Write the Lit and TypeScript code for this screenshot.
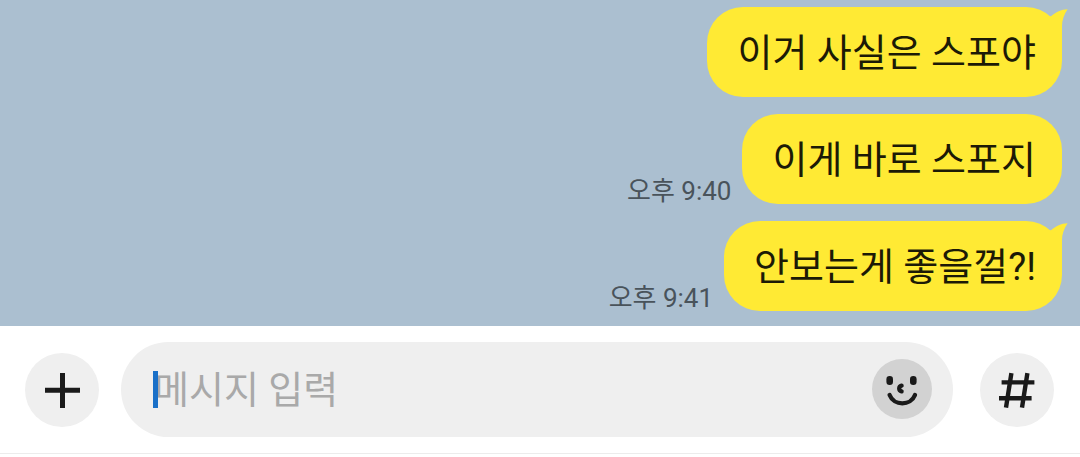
import { LitElement, html, css, nothing } from "lit";
import { customElement, property } from "lit/decorators.js";

interface Message {
  text: string;
  time?: string;
  tail?: boolean;
}

const messages: Message[] = [
  { text: "이거 사실은 스포야", tail: true },
  { text: "이게 바로 스포지", time: "오후 9:40" },
  { text: "안보는게 좋을껄?!", time: "오후 9:41", tail: true },
];

@customElement("chat-message")
export class ChatMessage extends LitElement {
  @property() text = "";
  @property() time = "";
  @property({ type: Boolean }) tail = false;

  static styles = css`
    :host {
      display: flex;
      justify-content: flex-end;
      align-items: flex-end;
      gap: 11px;
    }
    .time {
      font-size: 26px;
      line-height: 26px;
      color: #49535b;
    }
    .bubble {
      position: relative;
      margin: 0;
      padding: 20px 26px 18px 30px;
      border-radius: 36px;
      background: #ffea34;
      color: #1c1a06;
      font-size: 38px;
      line-height: 52px;
    }
    .tail {
      position: absolute;
      top: 0;
      right: -6px;
      width: 24px;
      height: 36px;
      fill: #ffea34;
    }
  `;

  render() {
    return html`
      ${this.time ? html`<time class="time">${this.time}</time>` : nothing}
      <p class="bubble">
        ${this.tail
          ? html`<svg class="tail" viewBox="0 0 24 36" aria-hidden="true">
              <path d="M7 9.3C12 5 17 2.4 23.6 2.2C20 7.5 18 13 18 19V36H0V9.3Z" />
            </svg>`
          : nothing}${this.text}
      </p>
    `;
  }
}

@customElement("message-composer")
export class MessageComposer extends LitElement {
  static styles = css`
    :host {
      display: flex;
      align-items: center;
      padding: 16px 26px 16px 25px;
      background: #fff;
      border-bottom: 1px solid #ececec;
    }
    button {
      flex: none;
      padding: 0;
      border: 0;
      border-radius: 50%;
      color: #1a1a1a;
      cursor: pointer;
    }
    svg {
      display: block;
      fill: none;
      stroke: currentColor;
    }
    .round {
      width: 74px;
      height: 74px;
      background: #efefef;
    }
    .face {
      width: 60px;
      height: 60px;
      background: #d2d2d2;
    }
    .field {
      position: relative;
      flex: 1;
      min-width: 0;
      display: flex;
      align-items: center;
      margin: 0 27px 0 22px;
      padding: 17px 21px 18px 33px;
      border-radius: 48px;
      background: #efefef;
    }
    input {
      flex: 1;
      min-width: 0;
      height: 60px;
      padding: 2px 0 0;
      border: 0;
      outline: 0;
      background: transparent;
      box-sizing: border-box;
      font: inherit;
      font-size: 38px;
      color: #1a1a1a;
    }
    input::placeholder {
      color: #a9a9a9;
      opacity: 1;
    }
    .caret {
      position: absolute;
      left: 32px;
      top: 29px;
      width: 5px;
      height: 37px;
      background: #1a70c8;
    }
  `;

  render() {
    return html`
      <button class="round" type="button" aria-label="추가">
        <svg viewBox="0 0 74 74" stroke-width="5">
          <path d="M20 37.2H55M37.5 20V55" />
        </svg>
      </button>
      <div class="field">
        <input type="text" placeholder="메시지 입력" aria-label="메시지 입력" />
        <span class="caret"></span>
        <button class="face" type="button" aria-label="이모티콘">
          <svg viewBox="0 0 60 60" stroke-width="4.3" stroke-linecap="round">
            <rect x="14.4" y="17" width="6.6" height="9" rx="3.2" fill="currentColor" stroke="none" />
            <rect x="38" y="17" width="6.6" height="9" rx="3.2" fill="currentColor" stroke="none" />
            <path d="M29.6 26.6C26.4 27.4 26.4 31.6 29.6 32.4" />
            <path d="M17.6 36C22 47.2 38.6 47.2 43 36" />
          </svg>
        </button>
      </div>
      <button class="round" type="button" aria-label="샵검색">
        <svg viewBox="0 0 74 74" stroke-width="4.4">
          <path d="M31.4 20.2L26 54.6M47.4 20.2L42 54.6M21.6 29.4H54.4M19 45.2H51.6" />
        </svg>
      </button>
    `;
  }
}

@customElement("app-root")
export class AppRoot extends LitElement {
  static styles = css`
    :host {
      display: flex;
      flex-direction: column;
      min-height: 100vh;
      background: #fff;
      font-family: Roboto, "Noto Sans CJK KR", sans-serif;
    }
    .chat {
      display: flex;
      flex-direction: column;
      gap: 17px;
      padding: 7px 18px 15px;
      background: #abbfd0;
    }
  `;

  render() {
    return html`
      <main class="chat">
        ${messages.map(
          (m) => html`<chat-message .text=${m.text} .time=${m.time ?? ""} .tail=${!!m.tail}></chat-message>`
        )}
      </main>
      <message-composer></message-composer>
    `;
  }
}
